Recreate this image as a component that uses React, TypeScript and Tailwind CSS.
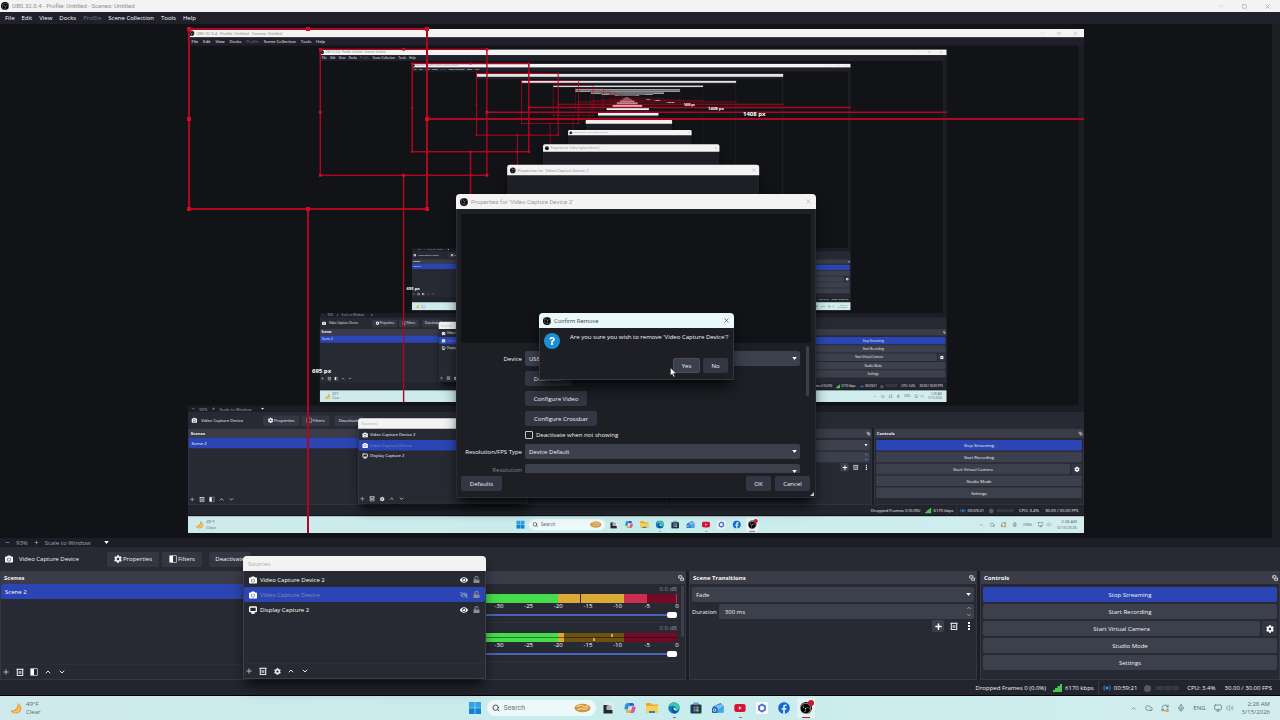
import { useId, type ReactNode } from 'react';
import { FaCamera, FaCog, FaEye, FaEyeSlash, FaFacebook, FaQuestion, FaUnlock, FaYoutube } from 'react-icons/fa';
import { SiObsstudio } from 'react-icons/si';
import {
  ChevronDown,
  ChevronUp,
  Cloud,
  Mic,
  Minus,
  Monitor,
  Plus,
  RefreshCw,
  Search,
  Square,
  Volume2,
  X,
} from 'lucide-react';

// How many captures of the desktop are nested in the preview
const MAX_DEPTH = 13;
// Past this depth only the window frames are drawn
const TEXT_DEPTH = 3;
// From here on the frames melt into grey strips
const BLUR_DEPTH = 7;

const SCALE_MARKS = ['-60', '-55', '-50', '-45', '-40', '-35', '-30', '-25', '-20', '-15', '-10', '-5', '0'];

function ObsMark() {
  return (
    <span className="grid size-[8px] shrink-0 place-items-center rounded-full bg-black text-[#d8d8d8]">
      <SiObsstudio className="size-[7px]" />
    </span>
  );
}

function Caret({ className = '' }: { className?: string }) {
  return (
    <svg viewBox="0 0 6 4" className={`h-[3px] w-[5px] fill-white ${className}`}>
      <path d="M0 0h6L3 4z" />
    </svg>
  );
}

function FilterIcon() {
  return (
    <svg viewBox="0 0 8 8" className="size-[8px]">
      <rect x="0.5" y="0.5" width="7" height="7" rx="0.5" fill="none" stroke="#a9abb4" />
      <rect x="1" y="1" width="3" height="6" fill="#fff" />
    </svg>
  );
}

function TrashIcon() {
  return (
    <svg viewBox="0 0 8 8" className="size-[8px]" fill="none" stroke="#e6e7ec">
      <path d="M0.500 1.300h7" strokeWidth="1.200" />
      <path d="M1.300 1.300v6.200h5.400V1.300" strokeWidth="1.100" />
      <path d="M3.200 3v3M4.800 3v3" strokeWidth="0.900" />
    </svg>
  );
}

function PopOutIcon() {
  return (
    <svg viewBox="0 0 8 8" className="size-[6px]" fill="none" stroke="#dfe0e6" strokeWidth="1.2">
      <path d="M5 3.5V1H1v3h2" />
      <path d="M3.5 4h4v3h-4z" />
    </svg>
  );
}

function IconButton({ label, children }: { label: string; children: ReactNode }) {
  return (
    <button type="button" aria-label={label} className="grid size-[10px] place-items-center text-[#e6e7ec]">
      {children}
    </button>
  );
}

function Dropdown({ label, value, id }: { label: string; value: string; id?: string }) {
  return (
    <div className="relative w-full">
      <select
        id={id}
        aria-label={id ? undefined : label}
        className="block h-[15px] w-full appearance-none rounded-[2px] bg-[#3c404d] pl-[4px] text-[#eeeef2]"
      >
        <option>{value}</option>
      </select>
      <Caret className="pointer-events-none absolute top-[6px] right-[3px]" />
    </div>
  );
}

function PushButton({ children, className = '' }: { children: ReactNode; className?: string }) {
  return (
    <button
      type="button"
      className={`flex h-[15px] items-center justify-center rounded-[2px] text-[#f2f2f5] ${className || 'bg-[#3c404d]'}`}
    >
      {children}
    </button>
  );
}

function TitleBar() {
  return (
    <header className="flex h-[12px] shrink-0 items-center bg-[#f3f3f3] pl-[1px] text-[#8f8f8f]">
      <ObsMark />
      <h1 className="ml-[3px] font-[Roboto,sans-serif]">OBS 32.0.4 - Profile: Untitled - Scenes: Untitled</h1>
      <div className="ml-auto flex gap-[13px] pr-[8px]">
        <IconButton label="Minimize">
          <Minus className="size-[6px] text-[#bbb]" />
        </IconButton>
        <IconButton label="Restore">
          <Square className="size-[5px] text-[#888]" />
        </IconButton>
        <IconButton label="Close">
          <X className="size-[7px] text-[#888]" />
        </IconButton>
      </div>
    </header>
  );
}

function MenuBar() {
  const items = ['File', 'Edit', 'View', 'Docks', 'Profile', 'Scene Collection', 'Tools', 'Help'];
  return (
    <nav className="flex h-[12px] shrink-0 items-center gap-[7px] bg-[#1f2029] pl-[5px]">
      {items.map((item) => (
        <button key={item} type="button" className={item === 'Profile' ? 'text-[#777982]' : 'text-white'}>
          {item}
        </button>
      ))}
    </nav>
  );
}

// Red bounding box of the selected source with its spacing guides
function SelectionOverlay({ depth }: { depth: number }) {
  const handles = [
    [1, 0], [120, 0], [239, 0],
    [1, 90], [239, 90],
    [1, 180], [120, 180], [239, 180],
  ];
  return (
    <>
      <svg viewBox="0 0 896 504" className="absolute inset-0 size-full overflow-visible">
        <g stroke="#b0061f" strokeWidth={depth > 1 ? 3 : 2} fill="none">
          <rect x="1" y="0" width="238" height="180" />
          <path d="M239 90H896M120 180V504" />
        </g>
        {handles.map(([x, y]) => (
          <rect key={`${x}-${y}`} x={x - 2} y={y - 2} width="4" height="4" fill="#d20a26" />
        ))}
      </svg>
      {depth <= 5 && (
        <>
          <span className="absolute top-[81px] left-[555px] font-bold text-white">1408 px</span>
          <span className="absolute top-[338px] left-[124px] font-bold text-white">695 px</span>
        </>
      )}
    </>
  );
}

function Preview({ depth }: { depth: number }) {
  const canvas = depth >= BLUR_DEPTH ? 'bg-[linear-gradient(#9c9c9c_20px,#121317_20px)]' : 'bg-[#121317]';
  return (
    <div className="flex min-h-0 flex-1 bg-[#1d1e22]">
      <div className={`flex flex-1 items-center justify-center ${canvas}`}>
        <div className="relative h-[504px] w-[896px]">
          <div className="size-full overflow-hidden">
            {depth < MAX_DEPTH && (
              <div inert className="h-[720px] w-[1280px] origin-top-left scale-70">
                <Desktop depth={depth + 1} />
              </div>
            )}
          </div>
          <SelectionOverlay depth={depth} />
        </div>
      </div>
      <div className="w-[8px]" />
    </div>
  );
}

function ZoomRow() {
  return (
    <div className="flex h-[9px] shrink-0 items-center bg-[#1d1e25] pl-[2px] text-[#a3a5ad]">
      <IconButton label="Zoom out">
        <Minus className="size-[5px]" />
      </IconButton>
      <span className="mr-[4px] ml-[4px]">93%</span>
      <IconButton label="Zoom in">
        <Plus className="size-[5px]" />
      </IconButton>
      <button type="button" className="ml-[3px] flex items-center gap-[13px]">
        Scale to Window
        <Caret />
      </button>
    </div>
  );
}

function SourceToolbar() {
  return (
    <div className="flex h-[24px] shrink-0 items-center bg-[#272a33] pl-[5px] text-[#f2f2f5]">
      <FaCamera className="size-[8px]" />
      <span className="ml-[6px] w-[88px]">Video Capture Device</span>
      <PushButton className="w-[52px] gap-[1px] bg-[#343743]">
        <FaCog className="size-[8px]" />
        Properties
      </PushButton>
      <PushButton className="ml-[3px] w-[40px] gap-[1px] bg-[#343743]">
        <FilterIcon />
        Filters
      </PushButton>
      <PushButton className="ml-[7px] w-[42px] bg-[#343743]">Deactivate</PushButton>
    </div>
  );
}

function Dock({ title, children }: { title: string; children: ReactNode }) {
  return (
    <section className="flex min-w-0 flex-col border-x border-b border-[#353844] bg-[#272a33]">
      <div className="flex h-[13px] shrink-0 items-center justify-between bg-[#3b3c48] pr-[1px] pl-[3px]">
        <h2 className="font-bold text-[#f5f5f8]">{title}</h2>
        <PopOutIcon />
      </div>
      {children}
    </section>
  );
}

function ScenesDock() {
  return (
    <Dock title="Scenes">
      <button type="button" className="h-[15px] rounded-[2px] bg-[#2b46b4] pl-[4px] text-left text-white">
        Scene 2
      </button>
      <div className="mt-auto flex gap-[4px] border-t border-[#2c2f3a] py-[2px]">
        <IconButton label="Add scene">
          <Plus className="size-[8px]" />
        </IconButton>
        <IconButton label="Remove scene">
          <TrashIcon />
        </IconButton>
        <IconButton label="Scene filters">
          <FilterIcon />
        </IconButton>
        <IconButton label="Move scene up">
          <ChevronUp className="size-[8px]" strokeWidth={3} />
        </IconButton>
        <IconButton label="Move scene down">
          <ChevronDown className="size-[8px]" strokeWidth={3} />
        </IconButton>
      </div>
    </Dock>
  );
}

function Segment({ to, from, className }: { to: number; from: number; className: string }) {
  return <div className={`h-full ${className}`} style={{ width: `${((to - from) / 60) * 100}%` }} />;
}

function MixerChannel({ name, children }: { name: string; children: ReactNode }) {
  return (
    <div className="flex h-[39px] flex-col border-b border-[#30333e] pt-[1px]">
      <span className="h-[9px] text-right text-[#8d8f98]">0.0 dB</span>
      <div className="relative flex h-[9px]">{children}</div>
      <div className="flex h-[8px] justify-between text-white">
        {SCALE_MARKS.map((mark) => (
          <span key={mark} className="flex w-0 justify-center leading-[7px]">
            {mark}
          </span>
        ))}
      </div>
      <input
        type="range"
        aria-label={`${name} volume`}
        defaultValue={100}
        className="h-[8px] w-full appearance-none bg-transparent [&::-webkit-slider-runnable-track]:h-[2px] [&::-webkit-slider-runnable-track]:bg-[#4a64b8] [&::-webkit-slider-thumb]:-mt-[2px] [&::-webkit-slider-thumb]:h-[6px] [&::-webkit-slider-thumb]:w-[10px] [&::-webkit-slider-thumb]:appearance-none [&::-webkit-slider-thumb]:rounded-[2px] [&::-webkit-slider-thumb]:bg-white"
      />
    </div>
  );
}

function MixerDock({ showChannels }: { showChannels: boolean }) {
  return (
    <Dock title="Audio Mixer">
      {showChannels && (
        <div className="flex justify-end gap-[4px] pr-[1px]">
          <div className="ml-[20px] flex-1">
            <MixerChannel name="Desktop audio">
              <Segment from={-60} to={-20} className="bg-[#45dc4c]" />
              <Segment from={-20} to={-9} className="bg-[#dba935]" />
              <Segment from={-9} to={-5} className="bg-[#cd2d50]" />
              <Segment from={-5} to={0} className="bg-[#730a25]" />
              <div className="absolute top-0 right-[27%] h-full w-[1px] bg-[#3d2d0a]" />
              <div className="absolute top-0 right-0 h-full w-[1px] bg-[#cd2d50]" />
            </MixerChannel>
            <MixerChannel name="Microphone">
              <Segment from={-60} to={-20} className="bg-[#45dc4c]" />
              <Segment from={-20} to={-19} className="bg-[#dba935]" />
              <Segment from={-19} to={-9} className="bg-[#6b5213]" />
              <Segment from={-9} to={0} className="bg-[#730a25]" />
              <div className="absolute top-[4px] left-0 h-[1px] w-full bg-black/45" />
              <div className="absolute top-[1px] right-[18%] h-[3px] w-[2px] bg-[#dba935]" />
              <div className="absolute top-[5px] right-[23%] h-[3px] w-[2px] bg-[#dba935]" />
            </MixerChannel>
          </div>
          <div className="mt-[1px] h-[52px] w-[3px] rounded-full bg-[#3c404d]" />
        </div>
      )}
    </Dock>
  );
}

function TransitionsDock() {
  const id = useId();
  return (
    <Dock title="Scene Transitions">
      <div className="flex flex-col gap-[2px] px-[2px] pt-[3px]">
        <Dropdown label="Transition" value="Fade" />
        <div className="flex items-center gap-[2px]">
          <label htmlFor={id} className="text-[#f2f2f5]">
            Duration
          </label>
          <div className="relative min-w-0 flex-1">
            <input
              id={id}
              defaultValue="300 ms"
              className="block h-[15px] w-full rounded-[2px] bg-[#3c404d] pl-[6px] text-[#f2f2f5]"
            />
            <div className="absolute top-[1px] right-[2px] flex flex-col gap-[1px] text-[#e6e7ec]">
              <ChevronUp className="size-[6px]" />
              <ChevronDown className="size-[6px]" />
            </div>
          </div>
        </div>
        <div className="-mt-[1px] flex justify-end gap-[4px]">
          <button type="button" aria-label="Add transition" className="grid size-[12px] place-items-center rounded-[2px] bg-[#3c404d]">
            <Plus className="size-[9px] text-white" strokeWidth={4} />
          </button>
          <button type="button" aria-label="Remove transition" className="grid size-[12px] place-items-center">
            <TrashIcon />
          </button>
          <button type="button" aria-label="Transition menu" className="grid h-[12px] w-[10px] place-items-center">
            <svg viewBox="0 0 2 8" className="h-[8px] w-[2px] fill-white">
              <path d="M0 0h2v2H0zM0 3h2v2H0zM0 6h2v2H0z" />
            </svg>
          </button>
        </div>
      </div>
    </Dock>
  );
}

function ControlsDock() {
  return (
    <Dock title="Controls">
      <div className="flex flex-col gap-[2px] px-[2px] pt-[3px]">
        <PushButton className="bg-[#2b46b4]">Stop Streaming</PushButton>
        <PushButton>Start Recording</PushButton>
        <div className="flex gap-[2px]">
          <PushButton className="flex-1 bg-[#3c404d]">Start Virtual Camera</PushButton>
          <button
            type="button"
            aria-label="Virtual camera settings"
            className="grid h-[15px] w-[15px] place-items-center rounded-[2px] bg-[#343743]"
          >
            <FaCog className="size-[8px] text-white" />
          </button>
        </div>
        <PushButton>Studio Mode</PushButton>
        <PushButton>Settings</PushButton>
      </div>
    </Dock>
  );
}

function StatusBar() {
  return (
    <footer className="flex h-[16px] shrink-0 items-center justify-end border-b border-black bg-[#23252e] pt-[1px] pr-[8px] text-[#f2f2f5]">
      <span>Dropped Frames 0 (0.0%)</span>
      <svg viewBox="0 0 9 8" className="mr-[3px] ml-[7px] h-[8px] w-[9px] fill-[#45c84c]">
        <path d="M0 6h2v2H0zM2 4h2.500v4H2zM4.500 2H7v6H4.500zM7 0h2v8H7z" />
      </svg>
      <span>6170 kbps</span>
      <span className="mx-[4px] h-[14px] w-[1px] bg-[#363945]" />
      <svg viewBox="0 0 8 6" className="mr-[3px] h-[6px] w-[8px]" fill="none" stroke="#3b7fc4">
        <circle cx="4" cy="3" r="1.200" fill="#5aa2ea" />
        <path d="M1.500 0.500Q0 3 1.500 5.500M6.500 0.500Q8 3 6.500 5.500" />
      </svg>
      <span>00:59:21</span>
      <span className="mr-[4px] ml-[7px] size-[7px] rounded-full bg-[#555762]" />
      <span className="text-[#676973]">00:00:00</span>
      <span className="ml-[8px]">CPU: 3.4%</span>
      <span className="ml-[9px]">30.00 / 30.00 FPS</span>
    </footer>
  );
}

function SourcesWindow() {
  const rows = [
    { name: 'Video Capture Device 2', display: false, active: false },
    { name: 'Video Capture Device', display: false, active: true },
    { name: 'Display Capture 2', display: true, active: false },
  ];
  return (
    <section className="absolute top-[556px] left-[243px] flex h-[123px] w-[243px] flex-col rounded-t-[4px] border-x border-b border-[#3c3e4a] bg-[#272a33] shadow-lg shadow-black/60">
      <h2 className="-mx-[1px] flex h-[15px] items-center rounded-t-[4px] bg-[#f3f3f3] pl-[5px] text-[#a9a9a9]">Sources</h2>
      <ul className="pt-[1px]">
        {rows.map((row) => (
          <li
            key={row.name}
            className={`flex h-[15px] items-center gap-[3px] rounded-[2px] px-[5px] ${row.active ? 'bg-[#2b46b4]' : ''}`}
          >
            {row.display ? (
              <Monitor className="size-[8px] text-white" strokeWidth={4} />
            ) : (
              <FaCamera className="size-[8px] text-white" />
            )}
            <span className={row.active ? 'text-[#7f8cc4]' : 'text-white'}>{row.name}</span>
            <button type="button" aria-label={`Toggle ${row.name}`} className="ml-auto">
              {row.active ? (
                <FaEyeSlash className="size-[8px] text-[#8a94bd]" />
              ) : (
                <FaEye className="size-[8px] text-white" />
              )}
            </button>
            <button type="button" aria-label={`Lock ${row.name}`} className="ml-[2px]">
              <FaUnlock className="size-[7px] text-[#8b8d96]" />
            </button>
          </li>
        ))}
      </ul>
      <div className="mt-auto flex gap-[4px] border-t border-[#2c2f3a] py-[2px]">
        <IconButton label="Add source">
          <Plus className="size-[8px]" />
        </IconButton>
        <IconButton label="Remove source">
          <TrashIcon />
        </IconButton>
        <IconButton label="Source properties">
          <FaCog className="size-[7px]" />
        </IconButton>
        <IconButton label="Move source up">
          <ChevronUp className="size-[8px]" strokeWidth={3} />
        </IconButton>
        <IconButton label="Move source down">
          <ChevronDown className="size-[8px]" strokeWidth={3} />
        </IconButton>
      </div>
    </section>
  );
}

function PropertiesForm() {
  const id = useId();
  return (
    <>
      <div className="mx-[4px] mt-[5px] h-[129px] shrink-0 bg-[#121317]" />
      <div className="flex min-h-0 flex-1 gap-[6px] overflow-hidden pt-[8px] pr-[6px] pl-[4px] text-[#f2f2f5]">
        <div className="grid flex-1 grid-cols-[61px_1fr] content-start items-center gap-x-[3px] gap-y-[5px]">
          <label htmlFor={`${id}-device`} className="text-right">
            Device
          </label>
          <Dropdown id={`${id}-device`} label="Device" value="USB Video" />
          <div className="col-start-2 flex flex-col items-start gap-[5px]">
            <PushButton className="w-[47px] bg-[#343743]">Deactivate</PushButton>
            <PushButton className="w-[62px] bg-[#343743]">Configure Video</PushButton>
            <PushButton className="w-[72px] bg-[#343743]">Configure Crossbar</PushButton>
          </div>
          <label className="col-start-2 flex items-center gap-[3px]">
            <input type="checkbox" className="size-[8px] appearance-none rounded-[1px] border border-[#c8c9cf]" />
            Deactivate when not showing
          </label>
          <label htmlFor={`${id}-type`} className="text-right whitespace-nowrap">
            Resolution/FPS Type
          </label>
          <Dropdown id={`${id}-type`} label="Resolution/FPS Type" value="Device Default" />
          <label htmlFor={`${id}-resolution`} className="self-start pt-[2px] text-right text-[#85878f]">
            Resolution
          </label>
          <Dropdown id={`${id}-resolution`} label="Resolution" value="" />
        </div>
        <div className="-mt-[5px] h-[50px] w-[3px] rounded-full bg-[#3c404d]" />
      </div>
      <div className="flex shrink-0 gap-[4px] pt-[3px] pr-[5px] pb-[6px] pl-[4px]">
        <PushButton className="w-[41px] bg-[#343743]">Defaults</PushButton>
        <PushButton className="ml-auto w-[25px] bg-[#343743]">OK</PushButton>
        <PushButton className="w-[35px] bg-[#343743]">Cancel</PushButton>
      </div>
      <svg viewBox="0 0 4 4" className="absolute right-[1px] bottom-[1px] size-[4px] fill-[#c0c1c7]">
        <path d="M4 0v4H0z" />
      </svg>
    </>
  );
}

function PropertiesDialog({ depth }: { depth: number }) {
  return (
    <section className="absolute top-[194px] left-[456px] flex h-[304px] w-[360px] flex-col rounded-t-[4px] border border-t-0 border-[#2c2d33] bg-[#1d1f25] shadow-lg shadow-black/70">
      <div
        className={`-mx-[1px] flex shrink-0 items-center rounded-t-[4px] pr-[4px] pl-[4px] text-[#9c9c9c] ${
          depth >= BLUR_DEPTH ? 'h-[52px] bg-[#cdbabd]' : 'h-[15px] bg-[#f3f3f3]'
        }`}
      >
        {depth <= TEXT_DEPTH && (
          <>
            <ObsMark />
            <h2 className="ml-[3px] font-[Roboto,sans-serif]">Properties for 'Video Capture Device 2'</h2>
            <button type="button" aria-label="Close properties" className="ml-auto">
              <X className="size-[7px]" />
            </button>
          </>
        )}
      </div>
      {depth === 0 && <PropertiesForm />}
    </section>
  );
}

function ConfirmDialog() {
  return (
    <section
      role="alertdialog"
      aria-label="Confirm Remove"
      className="absolute top-[313px] left-[539px] w-[195px] rounded-t-[4px] border border-t-0 border-[#34363e] bg-[#1d1f25] shadow-lg shadow-black/70"
    >
      <div className="-mx-[1px] flex h-[15px] items-center rounded-t-[4px] bg-[#e9f8f8] pr-[4px] pl-[4px] text-[#55595c]">
        <ObsMark />
        <h2 className="ml-[3px] font-[Roboto,sans-serif]">Confirm Remove</h2>
        <button type="button" aria-label="Close" className="ml-auto">
          <X className="size-[7px] text-[#333]" />
        </button>
      </div>
      <div className="flex gap-[10px] px-[4px] pt-[5px]">
        <span className="grid size-[16px] shrink-0 place-items-center rounded-full bg-[#1c8fd2]">
          <FaQuestion className="size-[8px] text-white" />
        </span>
        <p className="whitespace-nowrap text-[#f5f5f8]">Are you sure you wish to remove 'Video Capture Device'?</p>
      </div>
      <div className="flex justify-end gap-[3px] px-[5px] pt-[9px] pb-[6px]">
        <PushButton className="w-[27px] border border-[#4b4f5c] bg-[#3c404d]">Yes</PushButton>
        <PushButton className="w-[25px] bg-[#343743]">No</PushButton>
      </div>
    </section>
  );
}

function TaskIcon({ label, running, children }: { label: string; running?: boolean; children: ReactNode }) {
  return (
    <button type="button" aria-label={label} className="relative grid size-[22px] place-items-center">
      {children}
      {running && <span className="absolute bottom-[1px] left-[10px] h-[1px] w-[3px] bg-[#7b8284]" />}
    </button>
  );
}

function Taskbar() {
  return (
    <footer className="grid h-[24px] shrink-0 grid-cols-[1fr_auto_1fr] items-center bg-linear-to-r from-[#cfeaec] via-[#c8ecec] to-[#d3edef] text-[#5b6669]">
      <div className="flex items-center gap-[4px] pl-[10px]">
        <svg viewBox="0 0 12 12" className="size-[12px]">
          <path d="M7.500 1Q8 5 5.500 7T0.500 8.500Q2 11.500 6 11.500 11 11 11.300 6.500 11 2.500 7.500 1z" fill="#e79c34" />
          <path d="M8.500 2.500Q9 6 6.500 8T2 9.500Q4 11 6.500 10.500 10 9.500 10 6.500 10 4 8.500 2.500z" fill="#f8c860" />
        </svg>
        <div>
          <p>49°F</p>
          <p>Clear</p>
        </div>
      </div>

      <div className="flex items-center pr-[2px]">
        <TaskIcon label="Start">
          <svg viewBox="0 0 12 12" className="size-[12px]">
            <path d="M0 0h5.700v5.700H0zM6.300 0H12v5.700H6.300z" fill="#2ba3e6" />
            <path d="M0 6.300h5.700V12H0zM6.300 6.300H12V12H6.300z" fill="#1183d3" />
          </svg>
        </TaskIcon>
        <div className="mx-[1px] flex h-[16px] w-[109px] items-center rounded-full bg-[#edf8f8] pr-[5px] pl-[5px]">
          <Search className="size-[8px] text-[#333]" strokeWidth={2.5} />
          <input
            type="search"
            aria-label="Search"
            placeholder="Search"
            className="ml-[4px] min-w-0 flex-1 font-[Roboto,sans-serif] text-[7px] placeholder:text-[#6d7476]"
          />
          <svg viewBox="0 0 18 10" className="h-[10px] w-[17px]">
            <ellipse cx="9" cy="5" rx="8.500" ry="4.500" fill="#cf9440" />
            <path d="M3 4q3-3 6-1t6-1M4 7q3-2 6-1t5-2" stroke="#f3d795" strokeWidth="1.300" fill="none" />
          </svg>
        </div>
        <TaskIcon label="Task view">
          <svg viewBox="0 0 12 12" className="size-[12px]">
            <rect x="3" y="0" width="9" height="9" fill="#e3eaeb" />
            <path d="M1.500 3h5v5h4v3.500h-9z" fill="#26292c" />
            <path d="M4.500 3.500h5V8h-5z" fill="#aab4b6" />
          </svg>
        </TaskIcon>
        <TaskIcon label="Copilot">
          <svg viewBox="0 0 12 12" className="size-[12px]">
            <path d="M3.500 1h3Q5.300 1.500 4.800 3.500L3.800 7.500H1.500Q0 7.500 0.500 5.500L1.500 2.500Q2 1 3.500 1z" fill="#2b8fe0" />
            <path d="M6 1h2.500Q9.700 1 10 2.500l.3 1.200H7.500Q6.300 3.700 6 5L5.300 3.500Q5 1.500 6 1z" fill="#4250c8" />
            <path d="M8.500 11h-3q1.200-.5 1.700-2.500l1-4h2.300q1.500 0 1 2l-1 3Q10 11 8.500 11z" fill="#d9569a" />
            <path d="M6 11H3.500Q2.300 11 2 9.500L1.700 8.300h2.800Q5.700 8.300 6 7l.7 1.500Q7 10.500 6 11z" fill="#e8b234" />
          </svg>
        </TaskIcon>
        <TaskIcon label="File Explorer">
          <svg viewBox="0 0 12 12" className="size-[12px]">
            <path d="M0 1h5l1 1.500h6V11H0z" fill="#e8ad28" />
            <path d="M0 4h12v7H0z" fill="#fbd052" />
            <path d="M3 9h6v2H3z" fill="#2f80cf" />
          </svg>
        </TaskIcon>
        <TaskIcon label="Edge" running>
          <svg viewBox="0 0 12 12" className="size-[12px]">
            <circle cx="6" cy="6" r="5.700" fill="#1377c2" />
            <path d="M0.500 5A5.700 5.700 0 0 1 11.700 6Q11.500 8 9 8q-2 0-1.200-1.500Q7.500 4 5 4 2 3.500.500 5z" fill="#3cc6a8" />
            <path d="M5 4.500Q4 8 8 9.500q2 .3 3-1Q9 12 5.500 11 2 8 5 4.500z" fill="#0c4f9c" />
            <path d="M5.500 6q0 2.500 3.500 2.500L7 6z" fill="#d7f0f2" />
          </svg>
        </TaskIcon>
        <TaskIcon label="Microsoft Store">
          <svg viewBox="0 0 12 12" className="size-[12px]">
            <path d="M4 3V1h4v2" fill="none" stroke="#2b7fc0" />
            <rect x="0.500" y="2.500" width="11" height="9" rx="1" fill="#173a5c" />
            <path d="M3.500 4.500h2.200v2.200H3.500z" fill="#e35b36" />
            <path d="M6.300 4.500h2.200v2.200H6.300z" fill="#7fb83a" />
            <path d="M3.500 7.300h2.200v2.200H3.500z" fill="#35a3e0" />
            <path d="M6.300 7.300h2.200v2.200H6.300z" fill="#efb932" />
          </svg>
        </TaskIcon>
        <TaskIcon label="Outlook">
          <svg viewBox="0 0 12 12" className="size-[12px]">
            <path d="M1 4.500L8.500 1l3 3v6.500H2z" fill="#2478d0" />
            <path d="M3 4l6.500-2L11 4.500 6 8z" fill="#7cc3f2" />
            <path d="M11.500 4.500v6H3z" fill="#4aa5ea" />
            <rect x="0" y="5.500" width="5.500" height="5.500" rx="1" fill="#1560b5" />
            <circle cx="2.700" cy="8.200" r="1.300" fill="none" stroke="#fff" strokeWidth="0.800" />
          </svg>
        </TaskIcon>
        <TaskIcon label="YouTube" running>
          <FaYoutube className="size-[12px] text-[#dd1034]" />
        </TaskIcon>
        <TaskIcon label="Clipchamp">
          <svg viewBox="0 0 12 12" className="size-[12px]">
            <rect width="12" height="12" rx="1" fill="#f6f9fb" />
            <path d="M6 2.500l3 1.700v3.600L6 9.500 3 7.800V4.200z" fill="none" stroke="#5d62c4" strokeWidth="1.800" />
            <path d="M6 2.500l3 1.700v2.600" fill="none" stroke="#3f8fd0" strokeWidth="1.800" />
          </svg>
        </TaskIcon>
        <TaskIcon label="Facebook">
          <FaFacebook className="size-[12px] text-[#1668d8]" />
        </TaskIcon>
        <button type="button" aria-label="OBS Studio" className="relative ml-[2px] grid h-[20px] w-[18px] place-items-center rounded-[2px] bg-[#e3f4f2]">
          <span className="grid size-[12px] place-items-center rounded-full bg-black text-[#ddd]">
            <SiObsstudio className="size-[11px]" />
          </span>
          <span className="absolute top-[2px] right-[1px] size-[6px] rounded-full bg-[#d4132e]" />
          <span className="absolute bottom-0 left-[5px] h-[1px] w-[8px] bg-[#b5233b]" />
        </button>
      </div>

      <div className="flex items-center justify-end gap-[8px] pr-[10px]">
        <ChevronUp className="size-[7px]" />
        <Cloud className="size-[8px]" />
        <span className="relative">
          <RefreshCw className="size-[8px]" />
          <span className="absolute right-0 bottom-0 size-[3px] rounded-full bg-[#e89b2c]" />
        </span>
        <Mic className="size-[8px]" />
        <span>ENG</span>
        <div className="flex gap-[4px]">
          <Monitor className="size-[8px]" />
          <Volume2 className="size-[8px] text-[#8b9698]" />
        </div>
        <div className="text-right">
          <p>2:28 AM</p>
          <p>3/15/2026</p>
        </div>
      </div>
    </footer>
  );
}

function Desktop({ depth = 0 }: { depth?: number }) {
  const showText = depth <= TEXT_DEPTH;
  const frameTop = depth >= BLUR_DEPTH ? 'bg-[#9c9c9c]' : 'border-t-14 border-[#e4e4e4] bg-[#1f2029]';

  return (
    <div className="relative flex size-full flex-col overflow-hidden bg-[#1d1e25]">
      {showText ? (
        <>
          <TitleBar />
          <MenuBar />
        </>
      ) : (
        <div className={`h-[24px] shrink-0 ${frameTop}`} />
      )}
      <Preview depth={depth} />
      {showText ? (
        <>
          <ZoomRow />
          <SourceToolbar />
          <main className="grid h-[109px] shrink-0 grid-cols-[297fr_386fr_288fr_300fr] gap-x-[3px] bg-[#1d1e25]">
            <ScenesDock />
            <MixerDock showChannels={depth === 0} />
            <TransitionsDock />
            <ControlsDock />
          </main>
          <StatusBar />
          <Taskbar />
          <SourcesWindow />
        </>
      ) : (
        <div className="h-[182px] shrink-0 bg-[#272a33]" />
      )}
      <PropertiesDialog depth={depth} />
      {depth === 0 && (
        <>
          <ConfirmDialog />
          <svg viewBox="0 0 8 12" className="absolute top-[367px] left-[670px] h-[11px] w-[7px]">
            <path d="M0.500 0.500v9l2-1.800 1.500 3.300 1.500-.7L4 7.200h3z" fill="#fff" stroke="#111" strokeWidth="0.500" />
          </svg>
        </>
      )}
    </div>
  );
}

export default function App() {
  return (
    <div className="h-screen w-full font-['Open_Sans','Noto_Sans',sans-serif] text-[6px] leading-[8px]">
      <Desktop />
    </div>
  );
}
